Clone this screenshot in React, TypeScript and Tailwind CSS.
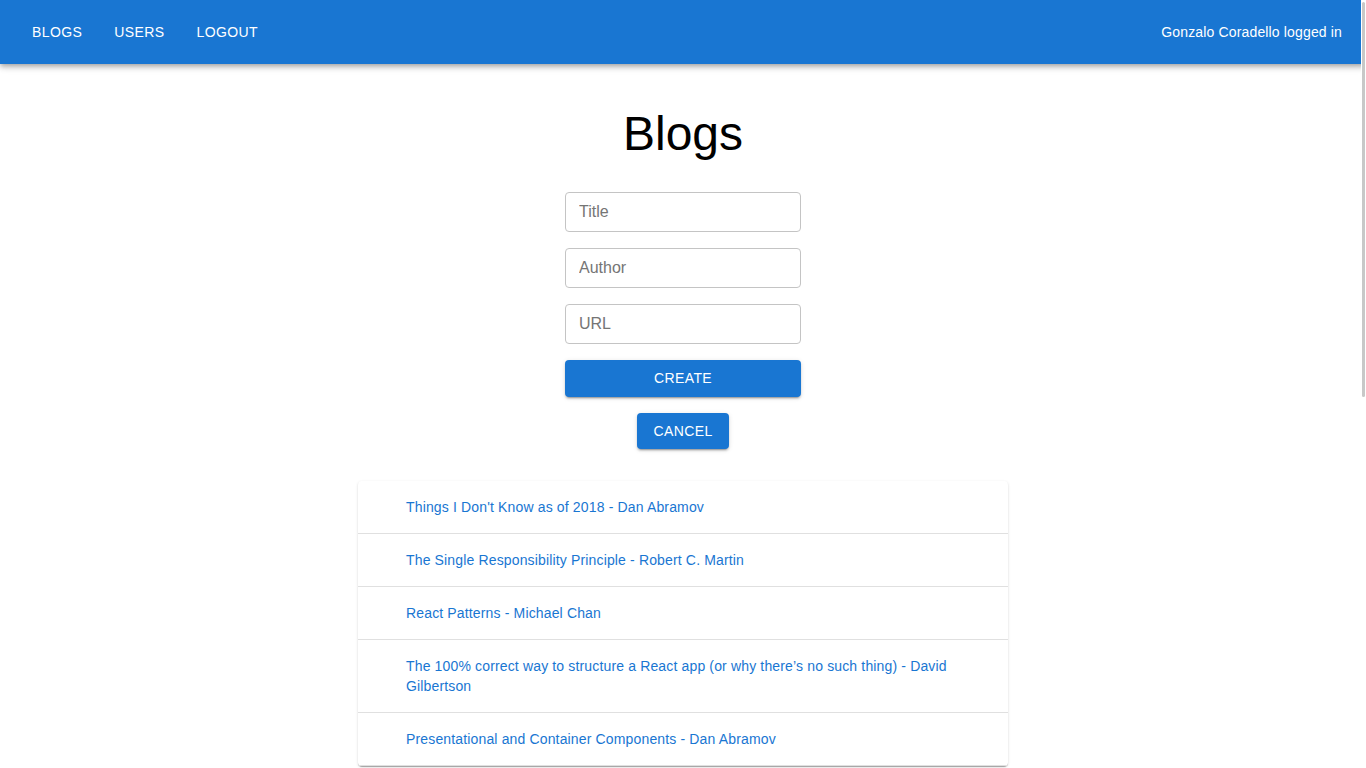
import React from "react";

const BLOGS = [
  "Things I Don't Know as of 2018 - Dan Abramov",
  "The Single Responsibility Principle - Robert C. Martin",
  "React Patterns - Michael Chan",
  "The 100% correct way to structure a React app (or why there’s no such thing) - David Gilbertson",
  "Presentational and Container Components - Dan Abramov",
];

const NavButton: React.FC<{ label: string }> = ({ label }) => (
  <button className="min-w-16 px-2 py-1.5 rounded text-sm tracking-[0.02857em] uppercase leading-[1.75] text-white">
    {label}
  </button>
);

const Field: React.FC<{ placeholder: string }> = ({ placeholder }) => (
  <input
    placeholder={placeholder}
    className="w-[236px] h-10 px-[13px] rounded border border-[#c4c4c4] text-base text-[#212121] placeholder:text-[#757575] outline-none"
  />
);

export default function App() {
  return (
    <div className="relative h-screen overflow-hidden bg-white font-['Liberation_Sans',Arial,sans-serif]">
      <header className="h-16 bg-[#1976d2] shadow-[0_2px_4px_-1px_rgba(0,0,0,0.2),0_4px_5px_0_rgba(0,0,0,0.14),0_1px_10px_0_rgba(0,0,0,0.12)] flex items-center px-6">
        <nav className="flex gap-4">
          <NavButton label="Blogs" />
          <NavButton label="Users" />
          <NavButton label="Logout" />
        </nav>
        <p className="ml-auto text-sm tracking-[0.01071em] text-white">
          Gonzalo Coradello logged in
        </p>
      </header>

      <main className="flex flex-col items-center pt-[42px]">
        <h1 className="text-5xl leading-[56px] text-black">Blogs</h1>

        <form className="mt-[30px] flex flex-col items-center gap-4">
          <Field placeholder="Title" />
          <Field placeholder="Author" />
          <Field placeholder="URL" />
          <button
            type="button"
            className="w-[236px] h-[36.5px] rounded bg-[#1976d2] text-white text-sm tracking-[0.02857em] shadow-[0_3px_1px_-2px_rgba(0,0,0,0.2),0_2px_2px_0_rgba(0,0,0,0.14),0_1px_5px_0_rgba(0,0,0,0.12)]"
          >
            CREATE
          </button>
          <button
            type="button"
            className="h-[36.5px] px-4 min-w-16 rounded bg-[#1976d2] text-white text-sm tracking-[0.02857em] shadow-[0_3px_1px_-2px_rgba(0,0,0,0.2),0_2px_2px_0_rgba(0,0,0,0.14),0_1px_5px_0_rgba(0,0,0,0.12)]"
          >
            CANCEL
          </button>
        </form>

        <div className="mt-8 w-[650px] rounded bg-white shadow-[0_2px_1px_-1px_rgba(0,0,0,0.2),0_1px_1px_0_rgba(0,0,0,0.14),0_1px_3px_0_rgba(0,0,0,0.12)]">
          {BLOGS.map((blog) => (
            <div
              key={blog}
              className="border-b border-[#e0e0e0] pl-12 pr-4 py-4 text-sm leading-5 tracking-[0.01071em]"
            >
              <a href="#" className="text-[#1976d2]">
                {blog}
              </a>
            </div>
          ))}
        </div>
      </main>

      <div className="absolute right-0 top-0 h-full w-[5px] bg-white">
        <div className="mx-auto mt-0.5 h-[395px] w-[3px] rounded-full bg-[#c8c8c8]" />
      </div>
    </div>
  );
}
